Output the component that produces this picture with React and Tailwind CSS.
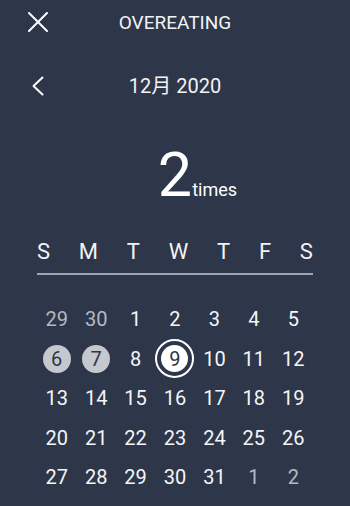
import React from "react";

const days = [
  { d: 29, dim: true }, { d: 30, dim: true }, { d: 1 }, { d: 2 }, { d: 3 }, { d: 4 }, { d: 5 },
  { d: 6, mark: "gray" }, { d: 7, mark: "gray" }, { d: 8 }, { d: 9, mark: "ring" }, { d: 10 }, { d: 11 }, { d: 12 },
  { d: 13 }, { d: 14 }, { d: 15 }, { d: 16 }, { d: 17 }, { d: 18 }, { d: 19 },
  { d: 20 }, { d: 21 }, { d: 22 }, { d: 23 }, { d: 24 }, { d: 25 }, { d: 26 },
  { d: 27 }, { d: 28 }, { d: 29 }, { d: 30 }, { d: 31 }, { d: 1, dim: true }, { d: 2, dim: true },
];

function Day({ d, dim, mark }) {
  if (mark === "gray") {
    return (
      <div className="h-[39.5px] flex items-center justify-center">
        <div className="w-[28px] h-[28px] rounded-full bg-[#c6c8cf] text-[#2e3649] flex items-center justify-center text-[20px] leading-none">
          {d}
        </div>
      </div>
    );
  }
  if (mark === "ring") {
    return (
      <div className="h-[39.5px] flex items-center justify-center">
        <div className="w-[39px] h-[39px] rounded-full border-[2.5px] border-white flex items-center justify-center">
          <div className="w-[27px] h-[27px] rounded-full bg-white text-[#2e3649] flex items-center justify-center text-[20px] leading-none">
            {d}
          </div>
        </div>
      </div>
    );
  }
  return (
    <div
      className={
        "h-[39.5px] flex items-center justify-center text-[20px] leading-none " +
        (dim ? "text-[#b4b9c3]" : "text-[#f4f5f7]")
      }
    >
      {d}
    </div>
  );
}

export default function App() {
  return (
    <div className="w-[350px] h-[506px] bg-[#2e3649] text-[#f2f3f5] overflow-hidden font-['Roboto',sans-serif]">
      <div className="h-[44px] grid grid-cols-[1fr_auto_1fr] items-center">
        <div className="pl-[28px] flex items-center">
          <svg width="20" height="20" viewBox="0 0 20 20" fill="none" stroke="white" strokeWidth="2" strokeLinecap="round">
            <line x1="1" y1="1" x2="19" y2="19" />
            <line x1="19" y1="1" x2="1" y2="19" />
          </svg>
        </div>
        <div className="text-[19px] leading-none">OVEREATING</div>
        <div />
      </div>
      <div className="h-[44px] mt-[20px] grid grid-cols-[1fr_auto_1fr] items-center">
        <div className="pl-[32px] flex items-center">
          <svg width="12" height="20" viewBox="0 0 12 20" fill="none" stroke="white" strokeWidth="2" strokeLinecap="round" strokeLinejoin="round">
            <polyline points="10.5,1.5 1.5,10 10.5,18.5" />
          </svg>
        </div>
        <div className="text-[20px] leading-none font-['Roboto','Noto_Sans_CJK_SC',sans-serif]">12月 2020</div>
        <div />
      </div>
      <div className="mt-[37px] grid grid-cols-[1fr_auto_1fr] items-baseline text-white">
        <div />
        <span className="text-[61px] leading-none">2</span>
        <span className="text-[18px] leading-none">times</span>
      </div>
      <div className="mt-[35px] mx-[37px] flex justify-between text-[22px] leading-none text-[#f2f3f5]">
        <span>S</span>
        <span>M</span>
        <span>T</span>
        <span>W</span>
        <span>T</span>
        <span>F</span>
        <span>S</span>
      </div>
      <div className="mt-[10px] mx-[37px] h-[1.5px] bg-[#a0a6b0]" />
      <div className="mt-[25px] mx-[37px] grid grid-cols-7">
        {days.map((x, i) => (
          <Day key={i} {...x} />
        ))}
      </div>
    </div>
  );
}
